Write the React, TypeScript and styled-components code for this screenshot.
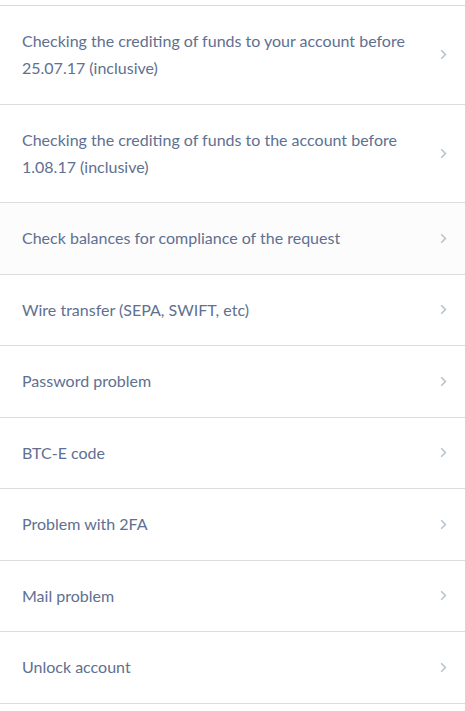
import React from "react";
import styled, { createGlobalStyle } from "styled-components";

const GlobalStyle = createGlobalStyle`
  html, body {
    margin: 0;
    padding: 0;
    background: #fff;
  }
  body {
    font-family: Lato, "Noto Sans", sans-serif;
  }
`;

const ListWrap = styled.ul`
  list-style: none;
  margin: 0;
  padding: 5px 0 0;
`;

const Row = styled.li<{ $highlight?: boolean }>`
  display: flex;
  align-items: center;
  justify-content: space-between;
  padding: 21px 18px 22.5px 22px;
  border-top: 1px solid #dcdcdc;
  background: ${(p) => (p.$highlight ? "#fcfcfd" : "#fff")};

  &:last-child {
    border-bottom: 1px solid #dcdcdc;
  }
`;

const Label = styled.span`
  flex: 1;
  max-width: 400px;
  font-size: 16px;
  line-height: 27px;
  color: #607090;
`;

const Chevron = styled.svg`
  flex: none;
  width: 7px;
  height: 11px;
  margin-top: 1px;
`;

const items = [
  "Checking the crediting of funds to your account before 25.07.17 (inclusive)",
  "Checking the crediting of funds to the account before 1.08.17 (inclusive)",
  "Check balances for compliance of the request",
  "Wire transfer (SEPA, SWIFT, etc)",
  "Password problem",
  "BTC-E code",
  "Problem with 2FA",
  "Mail problem",
  "Unlock account",
];

export default function App() {
  return (
    <>
      <GlobalStyle />
      <ListWrap>
        {items.map((text, i) => (
          <Row key={text} $highlight={i === 2}>
            <Label>{text}</Label>
            <Chevron viewBox="0 0 7 11">
              <path
                d="M1.2 1.2 L5.4 5.5 L1.2 9.8"
                fill="none"
                stroke="#b9c3cc"
                strokeWidth="1.6"
              />
            </Chevron>
          </Row>
        ))}
      </ListWrap>
    </>
  );
}
